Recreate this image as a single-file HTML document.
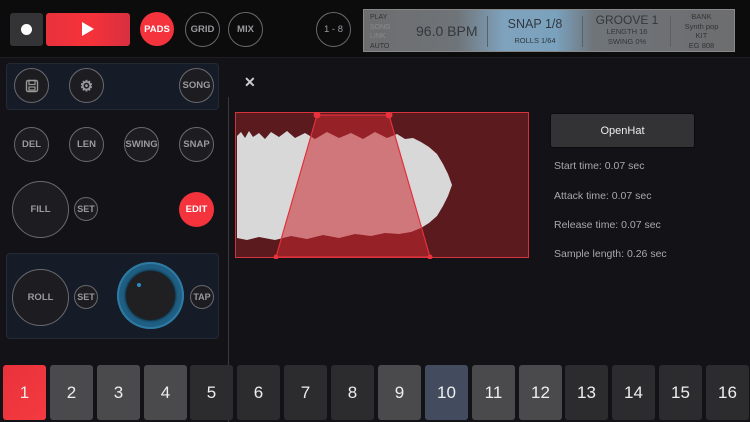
<!DOCTYPE html>
<html><head><meta charset="utf-8"><style>
*{margin:0;padding:0;box-sizing:border-box}
body{width:750px;height:422px;background:#131317;position:relative;overflow:hidden;font-family:"Liberation Sans",sans-serif;color:#aaa}
.a{position:absolute}
.c{position:absolute;border-radius:50%;border:1.2px solid #6a6a6e;display:flex;align-items:center;justify-content:center;font-size:9.5px;font-weight:bold;color:#9a9a9e;background:#1d1d21}
.pad{position:absolute;top:365px;width:43px;height:55px;border-radius:3px;display:flex;align-items:center;justify-content:center;color:#eee;font-size:17px;background:#2c2c2f}
.g{background:#4a4a4c}
.t{position:absolute;left:554px;font-size:10.5px;color:#a8a8ac}
</style></head><body>
<div class="a" style="left:0;top:0;width:750px;height:58px;background:#0c0c0d;border-bottom:1px solid #1e1e22"></div>
<div class="a" style="left:10px;top:13px;width:33px;height:33px;background:#343436;border-radius:3px"></div>
<div class="a" style="left:21px;top:24px;width:11px;height:11px;background:#fff;border-radius:50%"></div>
<div class="a" style="left:46px;top:13px;width:84px;height:33px;background:linear-gradient(90deg,#e8323c,#f6323a 50%,#d83040);border-radius:3px"></div>
<div class="a" style="left:82px;top:22px;width:0;height:0;border-left:12px solid #fff;border-top:7.5px solid transparent;border-bottom:7.5px solid transparent"></div>
<div class="c" style="left:140px;top:12px;width:34px;height:34px;background:#f4333d;border:none;color:#fff">PADS</div>
<div class="c" style="left:185px;top:12px;width:35px;height:35px;background:transparent">GRID</div>
<div class="c" style="left:228px;top:12px;width:35px;height:35px;background:transparent">MIX</div>
<div class="c" style="left:316px;top:12px;width:35px;height:35px;background:transparent;font-weight:normal">1 - 8</div>
<div class="a" style="left:363px;top:9px;width:372px;height:43px;background:linear-gradient(90deg,#6d6d6f 0%,#6f7478 25%,#7fa3be 38%,#7aa1bd 52%,#6f7479 62%,#6d6d6f 100%);border:1px solid #888;color:#33383e">
<div class="a" style="left:6px;top:3px;font-size:7px;line-height:9.5px"><span style="color:#333">PLAY</span><br><span style="color:#8a8a8a">SONG</span><br><span style="color:#8a8a8a">LINK</span><br><span style="color:#333">AUTO</span></div>
<div class="a" style="left:52px;top:13px;font-size:14px">96.0 BPM</div>
<div class="a" style="left:123px;top:6px;width:1px;height:31px;background:#5a6068"></div>
<div class="a" style="left:124px;top:7px;width:94px;text-align:center;font-size:12.5px;line-height:15px">SNAP 1/8<br><span style="font-size:7.5px;line-height:9px">ROLLS 1/64</span></div>
<div class="a" style="left:218px;top:6px;width:1px;height:31px;background:#5a6068"></div>
<div class="a" style="left:219px;top:3px;width:88px;text-align:center;font-size:12px;line-height:14px">GROOVE 1<br><span style="font-size:7.5px;line-height:9.5px;display:block">LENGTH 16<br>SWING 0%</span></div>
<div class="a" style="left:306px;top:6px;width:1px;height:31px;background:#5a6068"></div>
<div class="a" style="left:305px;top:2px;width:65px;text-align:center;font-size:7.5px;line-height:9.5px;color:#333">BANK<br>Synth pop<br>KIT<br>EG 808</div>
</div>
<div class="a" style="left:6px;top:63px;width:213px;height:47px;background:#151c27;border:1px solid #222a36;border-radius:4px"></div>
<div class="c" style="left:14px;top:68px;width:35px;height:35px"><svg width="14" height="14" viewBox="0 0 14 14"><rect x="1.5" y="1.5" width="11" height="11" rx="1.5" fill="none" stroke="#999" stroke-width="1.4"/><rect x="4" y="1.5" width="6" height="4" fill="none" stroke="#999" stroke-width="1.2"/><rect x="4" y="8" width="6" height="3" fill="none" stroke="#999" stroke-width="1.2"/></svg></div>
<div class="c" style="left:69px;top:68px;width:35px;height:35px;font-size:15px;color:#999">⚙</div>
<div class="c" style="left:179px;top:68px;width:35px;height:35px">SONG</div>
<div class="c" style="left:14px;top:127px;width:35px;height:35px">DEL</div>
<div class="c" style="left:69px;top:127px;width:35px;height:35px">LEN</div>
<div class="c" style="left:124px;top:127px;width:35px;height:35px">SWING</div>
<div class="c" style="left:179px;top:127px;width:35px;height:35px">SNAP</div>
<div class="c" style="left:12px;top:181px;width:57px;height:57px">FILL</div>
<div class="c" style="left:74px;top:197px;width:24px;height:24px;font-size:9px">SET</div>
<div class="c" style="left:179px;top:192px;width:35px;height:35px;background:#f4333d;border:none;color:#fff">EDIT</div>
<div class="a" style="left:6px;top:253px;width:213px;height:86px;background:#151c27;border:1px solid #222a36;border-radius:4px"></div>
<div class="c" style="left:12px;top:269px;width:57px;height:57px">ROLL</div>
<div class="c" style="left:74px;top:285px;width:24px;height:24px;font-size:9px">SET</div>
<div class="a" style="left:117px;top:262px;width:67px;height:67px;border-radius:50%;background:#1f5f84;box-shadow:inset 0 0 0 2px #2f7aa3"></div>
<div class="a" style="left:126px;top:271px;width:49px;height:49px;border-radius:50%;background:#202022;box-shadow:0 0 3px #000"></div>
<div class="a" style="left:137px;top:283px;width:4px;height:4px;border-radius:50%;background:#2b8bc4"></div>
<div class="c" style="left:190px;top:285px;width:24px;height:24px;font-size:9px">TAP</div>
<div class="a" style="left:228px;top:97px;width:1px;height:325px;background:#3a3a3e"></div>
<div class="a" style="left:244px;top:74px;font-size:14px;font-weight:bold;color:#ccc">✕</div>
<svg class="a" style="left:235px;top:112px" width="294" height="147" viewBox="0 0 294 147">
<rect x="0.5" y="0.5" width="293" height="145" fill="#5a1a1e" stroke="#d5333c"/>
<path d="M2 24 L6 20 10 26 14 19 18 25 24 21 30 27 36 20 44 25 52 19 60 26 70 21 80 27 92 20 104 26 116 21 128 27 140 20 152 26 162 22 170 27 178 26 186 30 194 35 202 42 208 52 213 62 217 73 213 84 208 94 202 104 194 111 186 116 176 120 164 122 150 121 136 124 120 122 104 126 88 123 72 127 56 124 40 128 24 125 12 128 2 126Z" fill="#d8d8d8"/>
<path d="M82 3 L154 3 195 145 41 145Z" fill="rgba(200,40,48,0.55)" stroke="#e0323c" stroke-width="1.2"/>
<circle cx="82" cy="3" r="3.5" fill="#e8323c"/><circle cx="154" cy="3" r="3.5" fill="#e8323c"/>
<circle cx="41" cy="145" r="2.5" fill="#e8323c"/><circle cx="195" cy="145" r="2.5" fill="#e8323c"/>
</svg>
<div class="a" style="left:550px;top:113px;width:145px;height:35px;background:#333336;border:1px solid #0c0c0e;border-radius:3px;color:#eee;font-size:11px;display:flex;align-items:center;justify-content:center">OpenHat</div>
<div class="t" style="top:160px">Start time: 0.07 sec</div>
<div class="t" style="top:190px">Attack time: 0.07 sec</div>
<div class="t" style="top:219px">Release time: 0.07 sec</div>
<div class="t" style="top:248px">Sample length: 0.26 sec</div>
<div class="pad" style="left:3px;background:linear-gradient(135deg,#e8323c,#f53a40)">1</div>
<div class="pad g" style="left:50px">2</div>
<div class="pad g" style="left:97px">3</div>
<div class="pad g" style="left:144px">4</div>
<div class="pad" style="left:190px">5</div>
<div class="pad" style="left:237px">6</div>
<div class="pad" style="left:284px">7</div>
<div class="pad" style="left:331px">8</div>
<div class="pad g" style="left:378px">9</div>
<div class="pad" style="left:425px;background:#434c5e">10</div>
<div class="pad g" style="left:472px">11</div>
<div class="pad g" style="left:519px">12</div>
<div class="pad" style="left:565px">13</div>
<div class="pad" style="left:612px">14</div>
<div class="pad" style="left:659px">15</div>
<div class="pad" style="left:706px">16</div>
</body></html>
